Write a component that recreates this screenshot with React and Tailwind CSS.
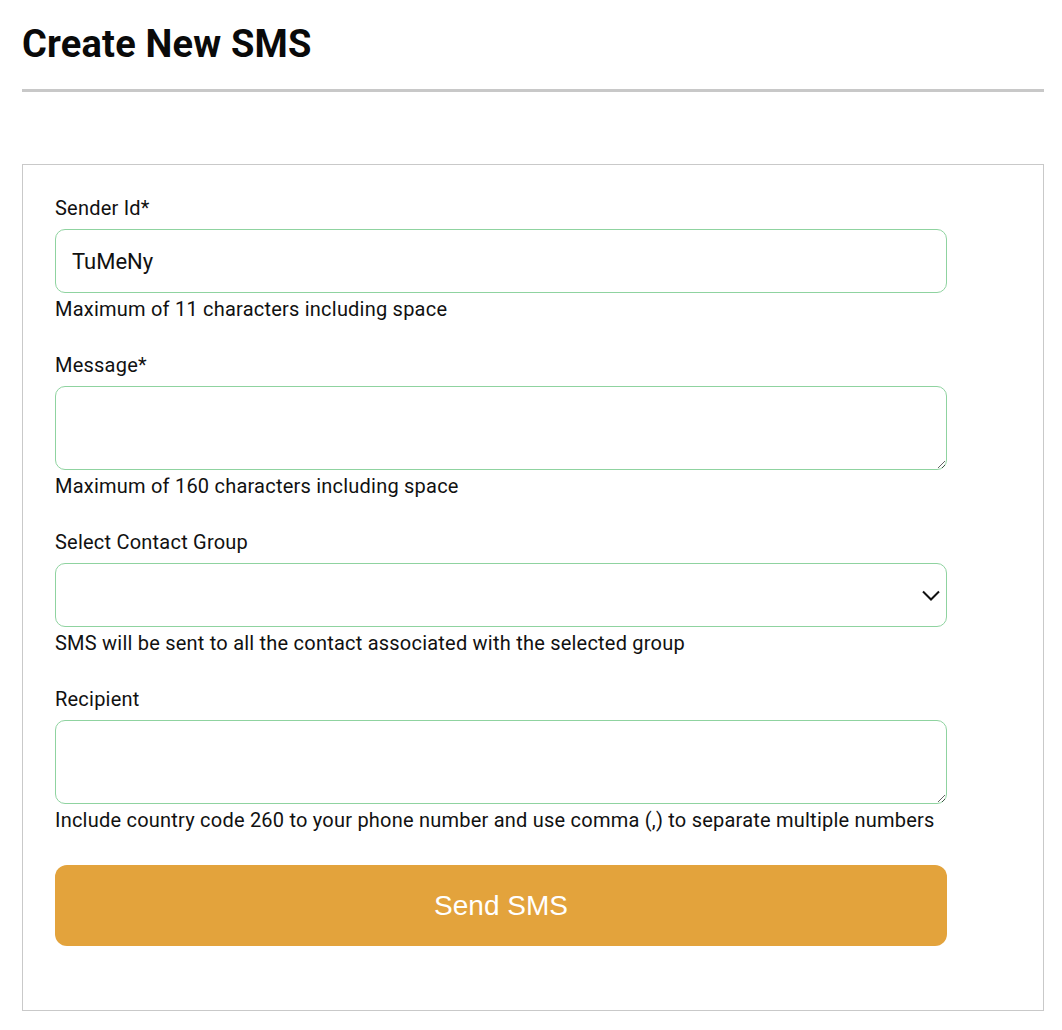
import React from "react";

function Field({ label, help, children, mt }) {
  return (
    <div className={mt}>
      <label className="block text-[20px] leading-[24px] tracking-[0.22px] text-[#111] mb-[9px]">{label}</label>
      {children}
      <p className="text-[20px] leading-[24px] tracking-[0.22px] text-[#111] mt-[4px]">{help}</p>
    </div>
  );
}

export default function App() {
  return (
    <div className="min-h-[1030px] bg-white pl-[22px] pr-[18px] pt-[21px] pb-[20px]" style={{ fontFamily: "Roboto, 'Liberation Sans', sans-serif" }}>
      <h1 className="text-[38px] leading-[46px] font-bold text-[#0a0a0a] tracking-[0.2px]">Create New SMS</h1>
      <div className="h-[3px] bg-[#c8c8c8] mt-[22px]" />
      <div className="mt-[72px] border border-[#c9c9c9] h-[847px] pl-[32px] pt-[31px]">
        <div className="w-[892px]">
          <Field label="Sender Id*" help="Maximum of 11 characters including space">
            <input
              defaultValue="TuMeNy"
              className="block w-full h-[64px] rounded-[10px] border border-[#8fd3a0] px-[16px] text-[22px] text-[#111] outline-none"
            />
          </Field>
          <Field mt="mt-[32px]" label="Message*" help="Maximum of 160 characters including space">
            <textarea className="block w-full h-[84px] rounded-[10px] border border-[#8fd3a0] px-[16px] py-[10px] text-[20px] outline-none" />
          </Field>
          <Field mt="mt-[32px]" label="Select Contact Group" help="SMS will be sent to all the contact associated with the selected group">
            <div className="relative">
              <select className="block w-full h-[64px] rounded-[10px] border border-[#8fd3a0] px-[16px] text-[20px] outline-none appearance-none bg-white">
                <option></option>
              </select>
              <svg className="absolute right-[7px] top-[27px] pointer-events-none" width="18" height="11" viewBox="0 0 18 11" fill="none">
                <path d="M1 1.5 L9 9.5 L17 1.5" stroke="#111" strokeWidth="2" />
              </svg>
            </div>
          </Field>
          <Field mt="mt-[32px]" label="Recipient" help="Include country code 260 to your phone number and use comma (,) to separate multiple numbers">
            <textarea className="block w-full h-[84px] rounded-[10px] border border-[#8fd3a0] px-[16px] py-[10px] text-[20px] outline-none" />
          </Field>
          <button
            className="block mt-[33px] w-full h-[81px] rounded-[12px] bg-[#e3a33c] text-white text-[28px]"
            style={{ fontFamily: "'Liberation Sans', Arial, sans-serif" }}
          >
            Send SMS
          </button>
        </div>
      </div>
    </div>
  );
}
